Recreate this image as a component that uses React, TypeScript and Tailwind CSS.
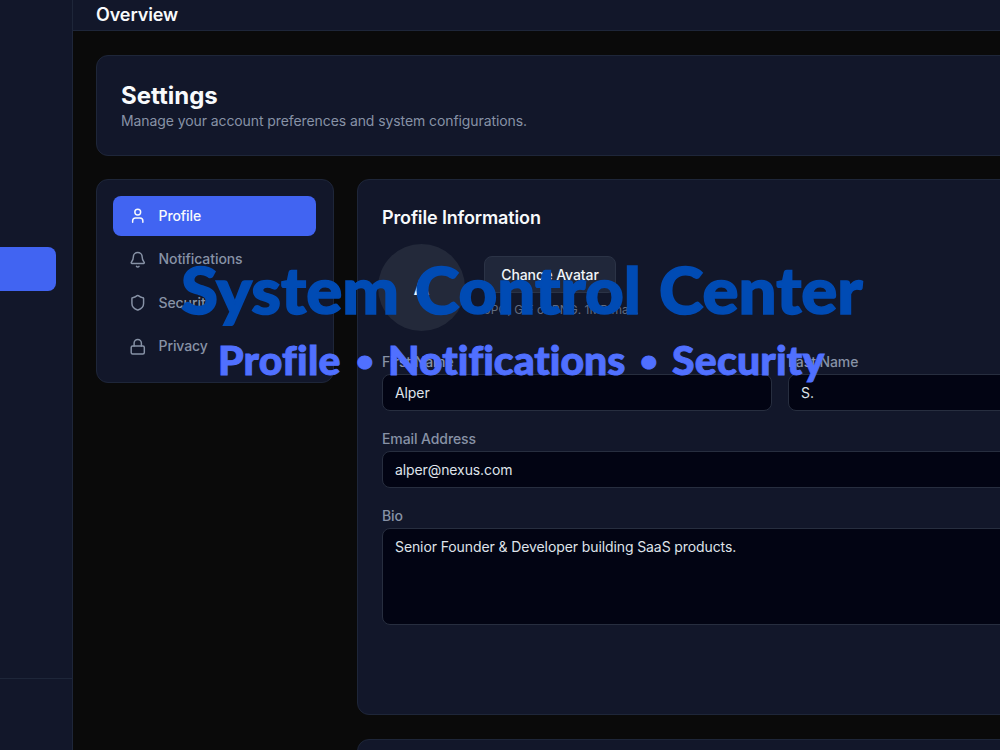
import type { ReactNode } from "react"
import { Bell, Lock, Shield, User } from "lucide-react"
import clsx from "clsx"

const sections = [
  { label: "Profile", icon: User },
  { label: "Notifications", icon: Bell },
  { label: "Security", icon: Shield },
  { label: "Privacy", icon: Lock },
]

function Sidebar() {
  return (
    <aside className="flex w-[73px] shrink-0 flex-col border-r border-[#1e2639] bg-[#12172a]">
      <div className="mt-[247px] h-11 w-14 rounded-r-lg bg-[#4164f2]" />
      <div className="mt-auto h-[72px] border-t border-[#1e2639]" />
    </aside>
  )
}

function SettingsNav() {
  return (
    <nav className="flex h-[204px] w-[238px] shrink-0 flex-col gap-1 rounded-xl border border-[#1e2639] bg-[#12172a] p-4">
      {sections.map(({ label, icon: Icon }) => (
        <a
          key={label}
          className={clsx(
            "flex h-[39.5px] w-[203.4px] shrink-0 items-center gap-3 rounded-lg pl-4 text-sm font-medium tracking-[-0.08px]",
            label === "Profile" ? "bg-[#4164f2] text-[#f8fafc]" : "text-[#8792a6]"
          )}
        >
          <Icon className="size-[17.5px]" strokeWidth={2} />
          {label}
        </a>
      ))}
    </nav>
  )
}

function Field({
  label,
  className,
  boxClassName = "h-[37px]",
  children,
}: {
  label: string
  className?: string
  boxClassName?: string
  children: ReactNode
}) {
  return (
    <label className={clsx("flex flex-col", className)}>
      <span className="mb-px pt-px text-sm font-medium leading-[22px] tracking-[-0.09px] text-[#8792a6]">
        {label}
      </span>
      <span
        className={clsx(
          "block rounded-lg border border-[#272e3f] bg-[#020413] px-3 py-2 text-sm tracking-[-0.1px] text-[#dfe3ea]",
          boxClassName
        )}
      >
        {children}
      </span>
    </label>
  )
}

function ProfileCard() {
  return (
    <section className="h-[536px] w-[860px] rounded-xl border border-[#1e2639] bg-[#12172a] px-6 pt-6">
      <h2 className="text-lg font-semibold leading-7 tracking-[-0.14px] text-[#f8fafc]">
        Profile Information
      </h2>
      <div className="-ml-1 mt-3 flex h-[87px] gap-[19px]">
        <div className="flex size-[87px] items-center justify-center rounded-full bg-[#23293a] text-[22px] font-semibold text-[#f8fafc]">
          A
        </div>
        <div className="pt-3">
          <button className="block h-[37px] w-[132px] rounded-lg border border-[#2b3346] bg-[#20273a] text-sm font-medium tracking-[-0.1px] text-[#f1f5f9]">
            Change Avatar
          </button>
          <p className="mt-[9px] text-xs leading-4 text-[#626c80]">
            JPG, GIF or PNG. 1MB max.
          </p>
        </div>
      </div>

      <div className="mt-[18.5px] flex gap-4">
        <Field label="First Name" className="w-[390px] shrink-0">
          Alper
        </Field>
        <Field label="Last Name" className="w-[391px] shrink-0">
          S.
        </Field>
      </div>
      <Field label="Email Address" className="mt-4">
        alper@nexus.com
      </Field>
      <Field label="Bio" className="mt-4" boxClassName="h-[97px]">
        Senior Founder &amp; Developer building SaaS products.
      </Field>
    </section>
  )
}

function Banner() {
  return (
    <div className="pointer-events-none absolute inset-0 whitespace-nowrap font-['Lato','Open_Sans',sans-serif] font-black [font-variant-ligatures:none] *:*:origin-left *:*:scale-x-105">
      <div className="flex pl-[181px] pt-[250px] text-[64px] leading-[80px] text-[#004bb4] [-webkit-text-stroke:1.6px_#004bb4]">
        <span className="w-[234px]">System</span>
        <span className="w-[244px]">Control</span>
        <span>Center</span>
      </div>
      <div className="flex pl-[218px] pt-[5px] text-[39px] leading-[50px] text-[#5070ff] [-webkit-text-stroke:0.9px_#5070ff]">
        <span className="w-[138px] tracking-[0.2px]">Profile</span>
        <span className="w-[32px] text-[29px]">•</span>
        <span className="w-[252px]">Notifications</span>
        <span className="w-[32px] text-[29px]">•</span>
        <span className="tracking-[0.2px]">Security</span>
      </div>
    </div>
  )
}

export default function App() {
  return (
    <div className="relative flex h-[750px] w-[1000px] overflow-hidden bg-[#0a0a0a] font-['Inter',sans-serif]">
      <Sidebar />
      <div className="min-w-0 flex-1 overflow-hidden">
        <header className="h-[31px] border-b border-[#1e2639] bg-[#12172a] pl-[23px] pt-px text-lg font-semibold leading-7 tracking-[-0.1px] text-[#f8fafc]">
          Overview
        </header>
        <main className="flex w-[1200px] flex-col gap-6 pl-[23px] pt-6">
          <section className="h-[101px] rounded-xl border border-[#1e2639] bg-[#12172a] px-6 pt-6">
            <h1 className="text-2xl font-bold leading-[31px] text-[#f8fafc]">Settings</h1>
            <p className="text-sm leading-5 tracking-[-0.09px] text-[#8792a6]">
              Manage your account preferences and system configurations.
            </p>
          </section>
          <div className="-mt-px flex gap-[23px]">
            <SettingsNav />
            <div className="flex flex-col gap-6">
              <ProfileCard />
              <section className="h-20 rounded-xl border border-[#1e2639] bg-[#12172a]" />
            </div>
          </div>
        </main>
      </div>
      <Banner />
    </div>
  )
}
